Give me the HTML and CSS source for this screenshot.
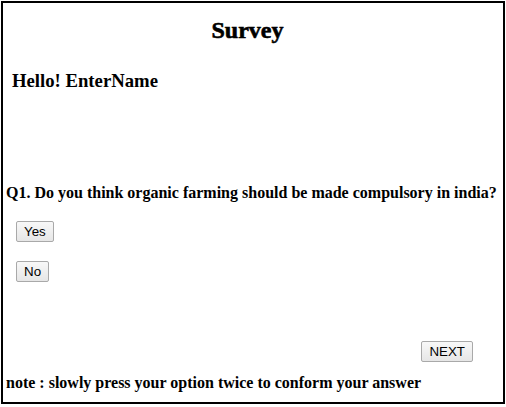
FILE: index.html
```html
<!DOCTYPE html>
<html>
<head>
<meta charset="utf-8">
<link rel="stylesheet" href="styles.css">
</head>
<body>
<div class="survey">
  <div class="title">Survey</div>
  <div class="hello">Hello! EnterName</div>
  <div class="question">Q1. Do you think organic farming should be made compulsory in india?</div>
  <div class="options">
    <button class="btn">Yes</button>
    <button class="btn">No</button>
  </div>
  <div class="nav">
    <button class="btn">NEXT</button>
  </div>
  <div class="note">note : slowly press your option twice to conform your answer</div>
</div>
</body>
</html>
```
FILE: styles.css
```css
html, body {
  margin: 0;
  padding: 0;
  background: #fff;
}
body {
  font-family: "Liberation Serif", "Times New Roman", serif;
  color: #000;
}
.survey {
  margin: 1px;
  border: 2px solid #000;
  padding: 14px 0 10px 3px;
}
.title {
  font-size: 24px;
  line-height: 26px;
  font-weight: bold;
  text-align: center;
  padding-right: 14px;
  -webkit-text-stroke: 0.6px #000;
}
.hello {
  margin-top: 27px;
  padding-left: 6px;
  font-size: 18.72px;
  line-height: 22px;
  font-weight: bold;
}
.question {
  margin-top: 92px;
  font-size: 16px;
  line-height: 18px;
  font-weight: bold;
}
.options {
  display: flex;
  flex-direction: column;
  align-items: flex-start;
  gap: 19px;
  margin-top: 19px;
  padding-left: 10px;
}
.btn {
  font-family: "Liberation Sans", Arial, sans-serif;
  font-size: 13.33px;
  line-height: 15px;
  color: #000;
  padding: 2px 7px;
  border: 1px solid #a9a9a9;
  border-radius: 2px;
  background: linear-gradient(#f8f8f8, #e6e6e6);
  margin: 0;
}
.nav {
  display: flex;
  justify-content: flex-end;
  margin-top: 59px;
  padding-right: 30px;
}
.note {
  margin-top: 12px;
  font-size: 16px;
  line-height: 18px;
  font-weight: bold;
}
```
